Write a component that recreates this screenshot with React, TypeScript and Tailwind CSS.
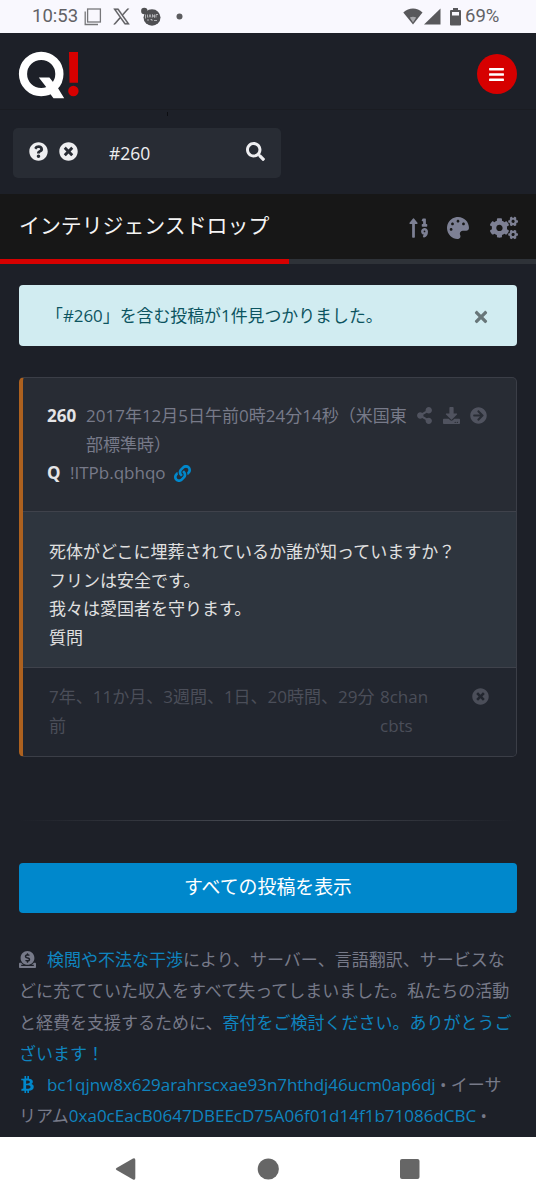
import React from "react";
import {
  FaQuestionCircle,
  FaTimesCircle,
  FaSearch,
  FaBars,
  FaSortNumericUp,
  FaPalette,
  FaCogs,
  FaTimes,
  FaShareAlt,
  FaDownload,
  FaArrowCircleRight,
  FaLink,
  FaDonate,
  FaBtc,
} from "react-icons/fa";

function StatusBar() {
  return (
    <div className="flex h-[33px] shrink-0 items-center bg-[#f9f8fe] pl-[32px] font-['Roboto',sans-serif] text-[18.5px] text-[#626266]">
      <span className="w-[52px] leading-[33px]">10:53</span>
      <svg width="18" height="18" viewBox="0 0 18 18" fill="none" stroke="#77777a" strokeWidth="1.3">
        <rect x="3.600" y="1" width="12.800" height="13" />
        <path d="M1.200 3.500V16.500H14" />
      </svg>
      <svg className="ml-[11px]" width="17" height="17" viewBox="0 0 24 24" fill="#58585b" stroke="#58585b" strokeWidth=".7">
        <path d="M14.100 10.300 22.300 1h-2l-7.100 8.100L7.600 1H1l8.600 12.200L1 23h2l7.500-8.600 6 8.600h6.600zM11.400 13.300l-.9-1.200L3.700 2.400h3l5.600 7.900.9 1.200 7.200 10.200h-3z" />
      </svg>
      <svg className="ml-[11px]" width="20" height="20" viewBox="0 0 20 20" fill="#4f4f52">
        <circle cx="3.300" cy="4" r="3.200" />
        <ellipse cx="11" cy="10.500" rx="8.500" ry="8.300" />
        <path d="M4.500 7.500v4M6.500 7.500v3M8 10.500l1-3 1 3M11.500 10.500v-3l2 3v-3M17 7.500h-2v3M6 13h2M9.500 12.500h1.500v1.500M13 13.500h3" stroke="#c8c8cc" strokeWidth=".8" fill="none" />
      </svg>
      <svg className="ml-[15px]" width="7" height="7" viewBox="0 0 7 7" fill="#5c5c5f"><circle cx="3.500" cy="3.500" r="3" /></svg>
      <div className="ml-auto flex items-center pr-[36px]">
        <svg width="20" height="17" viewBox="0 0 20 17" fill="#58585b">
          <path d="M.3 4.500C6-.7 14-.7 19.500 4.500L10 16.500z" />
          <path d="M6.800 9.500q3.200-1.600 6.400 0L10 14.500z" fill="#a5a5a9" />
        </svg>
        <svg className="ml-[1px]" width="17" height="17" viewBox="0 0 17 17" fill="#58585b"><path d="M0 16.500 16.500.5v16z" /></svg>
        <svg className="ml-[9px]" width="11" height="18" viewBox="0 0 11 18" fill="#58585b">
          <path fillRule="evenodd" d="M3 0h5v2h2q1 0 1 1v13.500q0 1-1 1H1q-1 0-1-1V3q0-1 1-1h2zM2 4v3.500h7V4z" />
        </svg>
        <span className="ml-[4px] w-[35px] whitespace-nowrap text-[18.500px] leading-[33px]">69%</span>
      </div>
    </div>
  );
}

function Logo() {
  return (
    <svg width="62" height="50" viewBox="18 50 62 50">
      <circle cx="41.200" cy="74" r="18.200" fill="none" stroke="#fff" strokeWidth="8.200" />
      <path d="M38.800 77.400h10.600l5.600 7 3.200 4.100 6 9.800H53.500l-4.500-6-3-5.500z" fill="#fff" />
      <path d="M69 52h9v30.700h-8.500z" fill="#d60000" />
      <circle cx="73.400" cy="91" r="5.200" fill="#d60000" />
    </svg>
  );
}

function Header() {
  return (
    <header className="flex h-[77px] shrink-0 items-start justify-between border-b border-[#1a1c22] pl-[18px] pr-[19px]">
      <div className="pt-[17px]"><Logo /></div>
      <button className="mt-[21px] flex size-10 items-center justify-center rounded-full bg-[#d60000] pr-px text-white">
        <FaBars size={17} />
      </button>
    </header>
  );
}

function SearchBar() {
  return (
    <div className="relative h-[84px] shrink-0 px-[13px] pt-[18px]">
      <span className="absolute left-[167px] top-[2px] h-[4px] w-px bg-[#0d0e12]" />
      <div className="flex h-[50px] w-[268px] items-center rounded-[5px] bg-[#282c34] pb-[3px] pl-[16px] pr-[16px] text-[#eeeef0]">
        <FaQuestionCircle size={19} />
        <FaTimesCircle size={19} className="ml-[11px]" />
        <span className="ml-[31px] pt-[3px] text-[17.500px]">#260</span>
        <FaSearch size={19} className="ml-auto" />
      </div>
    </div>
  );
}

function TitleBar() {
  return (
    <div className="shrink-0 bg-[#171717]">
      <div className="flex h-[65px] items-center pl-[19px] pr-[18px]">
        <h1 className="whitespace-nowrap pb-[4px] text-[20.900px] leading-[32px] text-[#f4f4f4]">インテリジェンスドロップ</h1>
        <div className="ml-auto flex items-center pt-[2px] text-[#7d8094]">
          <FaSortNumericUp size={22} />
          <FaPalette size={22} className="ml-[17px]" />
          <FaCogs size={28} className="ml-[21px]" />
        </div>
      </div>
      <div className="h-[5px] bg-[#2e3238]"><div className="h-full w-[289px] bg-[#d60000]" /></div>
    </div>
  );
}

function Alert() {
  return (
    <div className="flex h-[61px] shrink-0 items-center rounded-[4px] bg-[#d1ecf1] pl-[27px] pr-[27px] text-[#0c5460]">
      <span className="whitespace-nowrap text-[16.900px]">「#260」を含む投稿が1件見つかりました。</span>
      <FaTimes size={18} className="ml-auto mt-[3px] text-[#687679]" />
    </div>
  );
}

function PostCard() {
  return (
    <article className="mt-[31px] h-[380px] shrink-0 overflow-hidden rounded-[5px] border border-l-4 border-[#3b3e47] border-l-[#ad611f] bg-[#282c34] leading-[28.500px]">
      <div className="flex h-[133px] pl-[24px] pt-[24px] text-[#777a89]">
        <div className="w-[369px]">
          <div className="flex">
            <b className="w-[39px] font-bold text-[#e4e4e6]">260</b>
            <p className="whitespace-nowrap">2017年12月5日午前0時24分14秒（米国東<br />部標準時）</p>
          </div>
          <div className="flex items-center">
            <b className="w-[23px] font-bold text-[#e4e4e6]">Q</b>
            <span>!ITPb.qbhqo</span>
            <FaLink size={17} className="ml-[8px] text-[#0088cc]" />
          </div>
        </div>
        <div className="flex h-[27px] items-center text-[#50535f]">
          <FaShareAlt size={17} />
          <FaDownload size={17} className="ml-[10px]" />
          <FaArrowCircleRight size={17} className="ml-[10px]" />
        </div>
      </div>
      <div className="h-[157px] whitespace-nowrap border-y border-[#3f424b] bg-[#2e353e] pl-[26px] pt-[26px] text-[#e0e0e0]">
        <p>死体がどこに埋葬されているか誰が知っていますか？</p>
        <p>フリンは安全です。</p>
        <p>我々は愛国者を守ります。</p>
        <p>質問</p>
      </div>
      <div className="flex h-[88px] whitespace-nowrap bg-[#22262f] pl-[26px] pr-[27px] pt-[15px] text-[#4b4e59]">
        <p className="w-[331px]">7年、11か月、3週間、1日、20時間、29分<br />前</p>
        <p>8chan<br />cbts</p>
        <FaTimesCircle size={17} className="ml-auto mt-[5px]" />
      </div>
    </article>
  );
}

function Donation() {
  return (
    <div className="mt-[31px] whitespace-nowrap leading-[31.300px] text-[#777a89]">
      <div className="flex items-center">
        <FaDonate size={17} className="mr-[11px]" />
        <span><a className="text-[#0f84bf]">検閲や不法な干渉</a>により、サーバー、言語翻訳、サービスな</span>
      </div>
      <p>どに充てていた収入をすべて失ってしまいました。私たちの活動</p>
      <p>と経費を支援するために、<a className="text-[#0f84bf]">寄付をご検討ください。ありがとうご</a></p>
      <p className="text-[#0f84bf]">ざいます！</p>
      <div className="flex items-center">
        <FaBtc size={17} className="mr-[11px] text-[#0088cc]" />
        <span><a className="tracking-[-0.050px] text-[#0f84bf]">bc1qjnw8x629arahrscxae93n7hthdj46ucm0ap6dj</a> • イーサ</span>
      </div>
      <p>リアム<a className="text-[#0f84bf]">0xa0cEacB0647DBEEcD75A06f01d14f1b71086dCBC</a> •</p>
    </div>
  );
}

function NavigationBar() {
  return (
    <nav className="flex h-[63px] shrink-0 items-center justify-between bg-white pl-[114px] pr-[116px]">
      <svg width="24" height="24" viewBox="0 0 24 24" fill="#666"><path d="M2.500 11 19 1.500q2.300-1 2.300 1.500v18q0 2.500-2.300 1.500L2.500 13q-1.500-1 0-2z" /></svg>
      <svg width="24" height="24" viewBox="0 0 24 24" fill="#666"><circle cx="11.300" cy="12" r="10.600" /></svg>
      <svg width="20" height="20" viewBox="0 0 20 20" fill="#666"><rect width="19.500" height="20" rx="2" /></svg>
    </nav>
  );
}

export default function App() {
  return (
    <div className="flex h-[1200px] w-[536px] flex-col overflow-hidden bg-[#1d2028] font-['Open_Sans','Noto_Sans_CJK_JP',sans-serif] text-[17px]">
      <StatusBar />
      <Header />
      <SearchBar />
      <TitleBar />
      <main className="flex min-h-0 flex-1 flex-col overflow-hidden px-[19px] pt-[21px]">
        <Alert />
        <PostCard />
        <div className="mt-[63px] h-px shrink-0 bg-linear-to-r from-transparent via-[#4a4d55] to-transparent" />
        <button className="mt-[42px] h-[50px] shrink-0 rounded-[4px] bg-[#0088cc] pb-[1px] text-[18.900px] text-white">すべての投稿を表示</button>
        <Donation />
      </main>
      <NavigationBar />
    </div>
  );
}
